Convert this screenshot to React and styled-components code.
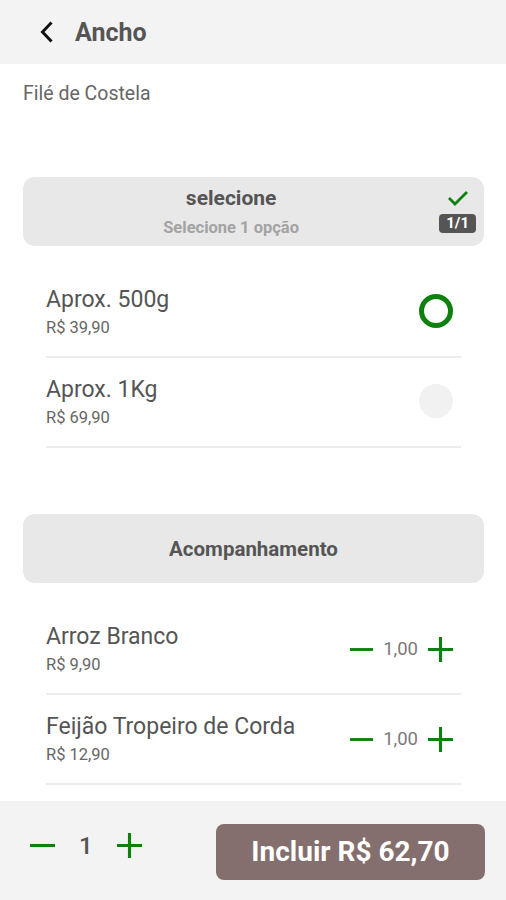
import React from "react";
import styled, { createGlobalStyle } from "styled-components";

const GREEN = "#0d800d";

const Global = createGlobalStyle`
  html, body { margin: 0; padding: 0; background: #fff; }
  body { font-family: Roboto, "Noto Sans", "Liberation Sans", sans-serif; }
  * { box-sizing: border-box; }
`;

const Page = styled.div`
  height: 900px;
  display: flex;
  flex-direction: column;
  overflow: hidden;
`;

const Header = styled.header`
  height: 64px;
  flex: none;
  background: #f4f3f3;
  display: flex;
  align-items: center;
  padding-left: 36px;
  gap: 19px;
`;

const BackBtn = styled.button`
  border: 0;
  background: none;
  padding: 0;
  width: 20px;
  height: 24px;
  display: flex;
  align-items: center;
  justify-content: center;
`;

const Title = styled.h1`
  margin: 0;
  font-size: 25px;
  font-weight: 700;
  color: #555;
`;

const Main = styled.main`
  flex: 1;
  overflow: hidden;
  padding: 20px 22px 0 23px;
`;

const Subtitle = styled.div`
  font-size: 19.5px;
  line-height: 20px;
  color: #666;
  margin-bottom: 73px;
`;

const GroupCard = styled.div`
  height: 69px;
  border-radius: 12px;
  background: #e8e8e8;
  display: flex;
  align-items: center;
  padding: 0 8px 0 0;
`;

const GroupText = styled.div`
  flex: 1;
  display: flex;
  flex-direction: column;
  align-items: center;
  gap: 10px;
  margin-right: ${(p) => (p.$full ? -8 : 0)}px;
`;

const GroupName = styled.div`
  font-size: ${(p) => p.$size || 21}px;
  font-weight: 700;
  color: #555;
  line-height: 22px;
`;

const GroupHint = styled.div`
  font-size: 16.5px;
  font-weight: 700;
  color: #a3a3a3;
  line-height: 18px;
`;

const GroupStatus = styled.div`
  display: flex;
  flex-direction: column;
  align-items: center;
  gap: 7px;
  margin-top: -2px;
`;

const Badge = styled.span`
  background: #555;
  color: #fff;
  font-size: 15px;
  font-weight: 700;
  border-radius: 4px;
  padding: 0 7px;
  line-height: 19px;
`;

const List = styled.div`
  padding: 22px 23px 0 23px;
  margin-bottom: ${(p) => p.$mb || 0}px;
`;

const Row = styled.div`
  display: flex;
  align-items: center;
  justify-content: space-between;
  padding: 18px 8px 18px 0;
  border-bottom: 2px solid #ececec;
`;

const Info = styled.div`
  display: flex;
  flex-direction: column;
`;

const ItemName = styled.div`
  font-size: 23px;
  line-height: 28px;
  color: #555;
  margin-bottom: 4px;
`;

const Price = styled.div`
  font-size: 16.5px;
  line-height: 20px;
  color: #666;
`;

const Radio = styled.span`
  width: 34px;
  height: 34px;
  border-radius: 50%;
  margin-top: -2px;
  background: ${(p) => (p.$checked ? "transparent" : "#f1f1f1")};
  border: ${(p) => (p.$checked ? `5.5px solid ${GREEN}` : "none")};
`;

const Stepper = styled.div`
  display: flex;
  align-items: center;
  gap: ${(p) => p.$gap || 10}px;
  margin-top: ${(p) => p.$shift || 0}px;
`;

const Qty = styled.span`
  font-size: ${(p) => p.$size || 18.5}px;
  color: ${(p) => p.$color || "#7a7a7a"};
  font-weight: ${(p) => p.$weight || 400};
`;

const IconBtn = styled.button`
  border: 0;
  background: none;
  padding: 0;
  display: flex;
`;

const Footer = styled.footer`
  height: 99px;
  flex: none;
  background: #f4f3f3;
  display: flex;
  align-items: center;
  justify-content: space-between;
  padding: 0 21px 0 30px;
`;

const AddButton = styled.button`
  width: 269px;
  height: 56px;
  border: 0;
  border-radius: 8px;
  background: #846e6e;
  color: #fff;
  font-family: inherit;
  font-size: 28px;
  font-weight: 700;
  margin-top: 2px;
`;

const Minus = ({ w = 24 }) => (
  <svg width={w} height={w} viewBox="0 0 24 24">
    <path d="M0 12H24" stroke={GREEN} strokeWidth="3" />
  </svg>
);
const Plus = ({ w = 25 }) => (
  <svg width={w} height={w} viewBox="0 0 24 24">
    <path d="M0 12H24M12 0V24" stroke={GREEN} strokeWidth="3" />
  </svg>
);

const options = [
  { name: "Aprox. 500g", price: "R$ 39,90", checked: true },
  { name: "Aprox. 1Kg", price: "R$ 69,90", checked: false },
];
const sides = [
  { name: "Arroz Branco", price: "R$ 9,90" },
  { name: "Feijão Tropeiro de Corda", price: "R$ 12,90" },
];

export default function App() {
  return (
    <Page>
      <Global />
      <Header>
        <BackBtn aria-label="voltar">
          <svg width="17" height="22" viewBox="0 0 17 22">
            <path d="M12.5 2.5L4.5 11l8 8.5" fill="none" stroke="#111" strokeWidth="3" strokeLinecap="square" />
          </svg>
        </BackBtn>
        <Title>Ancho</Title>
      </Header>
      <Main>
        <Subtitle>Filé de Costela</Subtitle>
        <GroupCard>
          <GroupText>
            <GroupName>selecione</GroupName>
            <GroupHint>Selecione 1 opção</GroupHint>
          </GroupText>
          <GroupStatus>
            <svg width="22" height="18" viewBox="0 0 22 18">
              <path d="M2 9l6 6L20 3" fill="none" stroke={GREEN} strokeWidth="2.8" />
            </svg>
            <Badge>1/1</Badge>
          </GroupStatus>
        </GroupCard>
        <List $mb={66}>
          {options.map((o) => (
            <Row key={o.name}>
              <Info>
                <ItemName>{o.name}</ItemName>
                <Price>{o.price}</Price>
              </Info>
              <Radio $checked={o.checked} />
            </Row>
          ))}
        </List>
        <GroupCard>
          <GroupText $full>
            <GroupName $size={20.5}>Acompanhamento</GroupName>
          </GroupText>
        </GroupCard>
        <List>
          {sides.map((s) => (
            <Row key={s.name}>
              <Info>
                <ItemName>{s.name}</ItemName>
                <Price>{s.price}</Price>
              </Info>
              <Stepper>
                <IconBtn aria-label="menos"><Minus w={23} /></IconBtn>
                <Qty>1,00</Qty>
                <IconBtn aria-label="mais"><Plus /></IconBtn>
              </Stepper>
            </Row>
          ))}
        </List>
      </Main>
      <Footer>
        <Stepper $gap={24} $shift={-10}>
          <IconBtn aria-label="menos"><Minus w={25} /></IconBtn>
          <Qty $size={24} $color="#555" $weight={500}>1</Qty>
          <IconBtn aria-label="mais"><Plus w={25} /></IconBtn>
        </Stepper>
        <AddButton>Incluir R$ 62,70</AddButton>
      </Footer>
    </Page>
  );
}
